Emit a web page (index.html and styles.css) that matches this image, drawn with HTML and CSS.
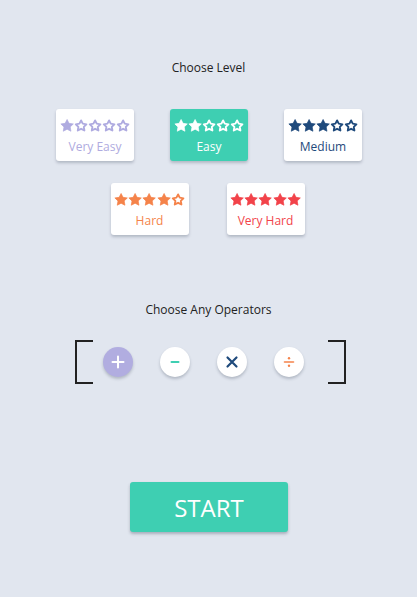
FILE: index.html
```html
<!DOCTYPE html>
<html lang="en">
<head>
<meta charset="utf-8">
<title>Choose Level</title>
<link rel="stylesheet" href="styles.css">
</head>
<body>
<svg class="defs" width="0" height="0" aria-hidden="true">
  <defs>
    <symbol id="star-fill" viewBox="0 0 24 24">
      <polygon points="12,1.8 15.23,8.35 22.5,9.4 17.23,14.5 18.5,21.7 12,18.3 5.5,21.7 6.77,14.5 1.5,9.4 8.77,8.35" fill="currentColor" stroke="currentColor" stroke-width="1.2" stroke-linejoin="round"/>
    </symbol>
    <symbol id="star-empty" viewBox="0 0 24 24">
      <polygon points="12,3.4 14.82,8.92 21,10 16.57,14.28 17.6,20.4 12,17.6 6.4,20.4 7.43,14.28 3,10 9.18,8.92" fill="none" stroke="currentColor" stroke-width="3.2" stroke-linejoin="round"/>
    </symbol>
  </defs>
</svg>
<main class="app">
  <h2 class="title">Choose Level</h2>
  <div class="levels">
    <div class="level-row">
      <div class="card lvl-1">
        <div class="stars"><svg><use href="#star-fill"/></svg><svg><use href="#star-empty"/></svg><svg><use href="#star-empty"/></svg><svg><use href="#star-empty"/></svg><svg><use href="#star-empty"/></svg></div>
        <span class="label">Very Easy</span>
      </div>
      <div class="card lvl-2 active">
        <div class="stars"><svg><use href="#star-fill"/></svg><svg><use href="#star-fill"/></svg><svg><use href="#star-empty"/></svg><svg><use href="#star-empty"/></svg><svg><use href="#star-empty"/></svg></div>
        <span class="label">Easy</span>
      </div>
      <div class="card lvl-3">
        <div class="stars"><svg><use href="#star-fill"/></svg><svg><use href="#star-fill"/></svg><svg><use href="#star-fill"/></svg><svg><use href="#star-empty"/></svg><svg><use href="#star-empty"/></svg></div>
        <span class="label">Medium</span>
      </div>
    </div>
    <div class="level-row row-2">
      <div class="card lvl-4">
        <div class="stars"><svg><use href="#star-fill"/></svg><svg><use href="#star-fill"/></svg><svg><use href="#star-fill"/></svg><svg><use href="#star-fill"/></svg><svg><use href="#star-empty"/></svg></div>
        <span class="label">Hard</span>
      </div>
      <div class="card lvl-5">
        <div class="stars"><svg><use href="#star-fill"/></svg><svg><use href="#star-fill"/></svg><svg><use href="#star-fill"/></svg><svg><use href="#star-fill"/></svg><svg><use href="#star-fill"/></svg></div>
        <span class="label">Very Hard</span>
      </div>
    </div>
  </div>

  <h2 class="title title-ops">Choose Any Operators</h2>
  <div class="ops">
    <div class="bracket bracket-left"></div>
    <div class="op-list">
      <button class="op op-plus active" aria-label="plus">
        <svg viewBox="0 0 30 30"><path d="M15 9.5v11M9.5 15h11" stroke="#fff" stroke-width="2" stroke-linecap="round"/></svg>
      </button>
      <button class="op op-minus" aria-label="minus">
        <svg viewBox="0 0 30 30"><path d="M11.5 15h7" stroke="#3ecfb2" stroke-width="2" stroke-linecap="round"/></svg>
      </button>
      <button class="op op-times" aria-label="times">
        <svg viewBox="0 0 30 30"><path d="M10.5 10.5l9 9M19.5 10.5l-9 9" stroke="#1f4a7c" stroke-width="2.2" stroke-linecap="round"/></svg>
      </button>
      <button class="op op-divide" aria-label="divide">
        <svg viewBox="0 0 30 30"><path d="M10.5 15h9" stroke="#f5834a" stroke-width="1.6" stroke-linecap="round"/><circle cx="15" cy="11.2" r="1.2" fill="#f5834a"/><circle cx="15" cy="18.8" r="1.2" fill="#f5834a"/></svg>
      </button>
    </div>
    <div class="bracket bracket-right"></div>
  </div>

  <div class="start-wrap">
    <button class="start">START</button>
  </div>
</main>
</body>
</html>
```

FILE: styles.css
```css
* {
  box-sizing: border-box;
}

html, body {
  margin: 0;
  padding: 0;
}

body {
  background: #e1e6ef;
  font-family: "Open Sans", "Liberation Sans", sans-serif;
  width: 417px;
  height: 597px;
  overflow: hidden;
}

.defs {
  position: absolute;
  width: 0;
  height: 0;
}

.app {
  display: flex;
  flex-direction: column;
  align-items: center;
  padding-top: 60px;
}

.title {
  margin: 0;
  font-size: 12px;
  font-weight: 400;
  line-height: 16px;
  color: #222;
}

.levels {
  margin-top: 33px;
  display: flex;
  flex-direction: column;
  gap: 22px;
  align-items: center;
}

.level-row {
  display: flex;
  gap: 36px;
  padding-left: 1px;
}

.row-2 {
  gap: 38px;
  padding-left: 0;
  margin-right: 2px;
}

.card {
  width: 78px;
  height: 52px;
  background: #fff;
  border-radius: 3px;
  box-shadow: 0 2px 3px rgba(40, 50, 70, 0.25);
  display: flex;
  flex-direction: column;
  align-items: center;
  padding-top: 9px;
}

.stars {
  display: flex;
  height: 15px;
}

.stars svg {
  width: 14.2px;
  height: 15px;
  display: block;
}

.label {
  margin-top: 6px;
  font-size: 12px;
  line-height: 16px;
}

.lvl-1 { color: #afabe0; }
.lvl-2 { color: #fff; }
.lvl-3 { color: #1f4a7c; }
.lvl-4 { color: #f5834a; }
.lvl-5 { color: #f2434a; }

.card.active {
  background: #3ecfb2;
}

.title-ops {
  margin-top: 67px;
}

.ops {
  margin-top: 22px;
  display: flex;
  align-items: center;
  padding-left: 4px;
}

.bracket {
  width: 18px;
  height: 44px;
  border: 2px solid #222;
}

.bracket-left {
  border-right: none;
}

.bracket-right {
  border-left: none;
}

.op-list {
  display: flex;
  gap: 27px;
  margin: 0 24px 0 10px;
}

.op {
  width: 30px;
  height: 30px;
  border-radius: 50%;
  border: none;
  padding: 0;
  background: #fff;
  box-shadow: 0 2px 3px rgba(40, 50, 70, 0.25);
  display: flex;
  align-items: center;
  justify-content: center;
}

.op svg {
  width: 30px;
  height: 30px;
  display: block;
}

.op-plus.active {
  background: #b1ade0;
}

.start-wrap {
  margin-top: 98px;
}

.start {
  width: 158px;
  height: 50px;
  border: none;
  border-radius: 3px;
  background: #3ecfb2;
  color: #fff;
  font-family: "Open Sans", "Liberation Sans", sans-serif;
  font-size: 24px;
  font-weight: 400;
  box-shadow: 0 2px 3px rgba(40, 50, 70, 0.3);
  padding: 0;
  margin-left: 1px;
}
```
